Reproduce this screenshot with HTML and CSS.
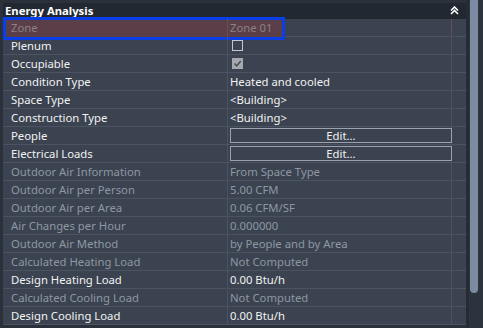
FILE: index.html
```html
<!DOCTYPE html>
<html lang="en">
<head>
    <meta charset="UTF-8">
    <title>Energy Analysis</title>
    <link rel="stylesheet" href="styles.css">
</head>
<body>
    <div class="panel">
        <div class="sheet">
            <div class="sheet-header">
                <span class="sheet-title">Energy Analysis</span>
                <svg class="collapse" width="9" height="9" viewBox="0 0 9 9">
                    <path d="M1 4.5 L4.5 1 L8 4.5 M1 8 L4.5 4.5 L8 8" fill="none" stroke="#fff" stroke-width="1.6"/>
                </svg>
            </div>
            <div class="rows">
                <div class="row selected disabled"><div class="label">Zone</div><div class="value">Zone 01</div><div class="pad"></div></div>
                <div class="row"><div class="label">Plenum</div><div class="value"><span class="check"></span></div><div class="pad"></div></div>
                <div class="row"><div class="label">Occupiable</div><div class="value"><span class="check checked">
                    <svg width="9" height="9" viewBox="0 0 9 9"><path d="M1.5 4.5 L3.7 6.8 L7.8 2" fill="none" stroke="#4a4f57" stroke-width="1.5"/></svg>
                </span></div><div class="pad"></div></div>
                <div class="row"><div class="label">Condition Type</div><div class="value">Heated and cooled</div><div class="pad"></div></div>
                <div class="row"><div class="label">Space Type</div><div class="value">&lt;Building&gt;</div><div class="pad"></div></div>
                <div class="row"><div class="label">Construction Type</div><div class="value">&lt;Building&gt;</div><div class="pad"></div></div>
                <div class="row"><div class="label">People</div><div class="value"><button class="edit">Edit...</button></div><div class="pad"></div></div>
                <div class="row"><div class="label">Electrical Loads</div><div class="value"><button class="edit">Edit...</button></div><div class="pad"></div></div>
                <div class="row disabled"><div class="label">Outdoor Air Information</div><div class="value">From Space Type</div><div class="pad"></div></div>
                <div class="row disabled"><div class="label">Outdoor Air per Person</div><div class="value">5.00 CFM</div><div class="pad"></div></div>
                <div class="row disabled"><div class="label">Outdoor Air per Area</div><div class="value">0.06 CFM/SF</div><div class="pad"></div></div>
                <div class="row disabled"><div class="label">Air Changes per Hour</div><div class="value">0.000000</div><div class="pad"></div></div>
                <div class="row disabled"><div class="label">Outdoor Air Method</div><div class="value">by People and by Area</div><div class="pad"></div></div>
                <div class="row disabled"><div class="label">Calculated Heating Load</div><div class="value">Not Computed</div><div class="pad"></div></div>
                <div class="row"><div class="label">Design Heating Load</div><div class="value">0.00 Btu/h</div><div class="pad"></div></div>
                <div class="row disabled"><div class="label">Calculated Cooling Load</div><div class="value">Not Computed</div><div class="pad"></div></div>
                <div class="row"><div class="label">Design Cooling Load</div><div class="value">0.00 Btu/h</div><div class="pad"></div></div>
            </div>
        </div>
        <div class="scrollbar">
            <div class="thumb"></div>
        </div>
    </div>
</body>
</html>
```

FILE: styles.css
```css
body {
    margin: 0;
    background-color: #2b313b;
    font-family: "Noto Sans", "Open Sans", sans-serif;
    font-size: 11.3px;
    color: #f2f2f2;
}
.panel {
    display: flex;
    height: 328px;
}
.sheet {
    width: 463px;
    padding: 3px 0 0 3px;
}
.sheet-header {
    height: 16px;
    background-color: #222831;
    display: flex;
    align-items: center;
    justify-content: space-between;
    padding: 0 7px 0 2px;
}
.sheet-title {
    font-weight: bold;
    color: #fff;
    line-height: 16px;
}
.collapse {
    margin-top: -1px;
}
.rows {
    background-color: #3b4350;
}
.row {
    display: grid;
    grid-template-columns: 225px 224px 13px;
    height: 17px;
    border-bottom: 1px solid #4b5363;
    position: relative;
}
.row > div {
    line-height: 17px;
    white-space: nowrap;
    position: relative;
    z-index: 1;
}
.label {
    padding-left: 8px;
    border-right: 1px solid #4b5363;
}
.value {
    padding-left: 2px;
    border-right: 1px solid #4b5363;
}
.disabled {
    color: #8e97a3;
}
.selected > div {
    border-right-color: #6a4d56;
}
.selected .pad {
    border-right-color: #4b5363;
}
.selected::after {
    content: "";
    position: absolute;
    z-index: 0;
    left: 0;
    top: -2px;
    width: 276px;
    height: 17px;
    border: 3px solid #0a3ee6;
    background-color: #5a3f48;
}
.selected .value,
.selected .label {
    color: #8c7f86;
}
.check {
    display: inline-flex;
    align-items: center;
    justify-content: center;
    box-sizing: border-box;
    width: 11px;
    height: 11px;
    margin: 3px 0 0 2px;
    border: 1px solid #c4c7cc;
    vertical-align: top;
}
.check.checked {
    background-color: #a5a8ad;
    border-color: #a5a8ad;
}
.edit {
    display: block;
    box-sizing: border-box;
    width: 222px;
    height: 15px;
    margin: 1px 0 0 0;
    padding: 0;
    background: transparent;
    border: 1px solid #9aa2ad;
    color: #f2f2f2;
    font: inherit;
    line-height: 13px;
}
.scrollbar {
    width: 17px;
    background-color: #2c333d;
    border-left: 3px solid #262c35;
    box-sizing: border-box;
}
.thumb {
    width: 8px;
    margin-left: 1px;
    height: 293px;
    background-color: #7b8ba1;
    border-radius: 0 0 4px 4px;
}
```
